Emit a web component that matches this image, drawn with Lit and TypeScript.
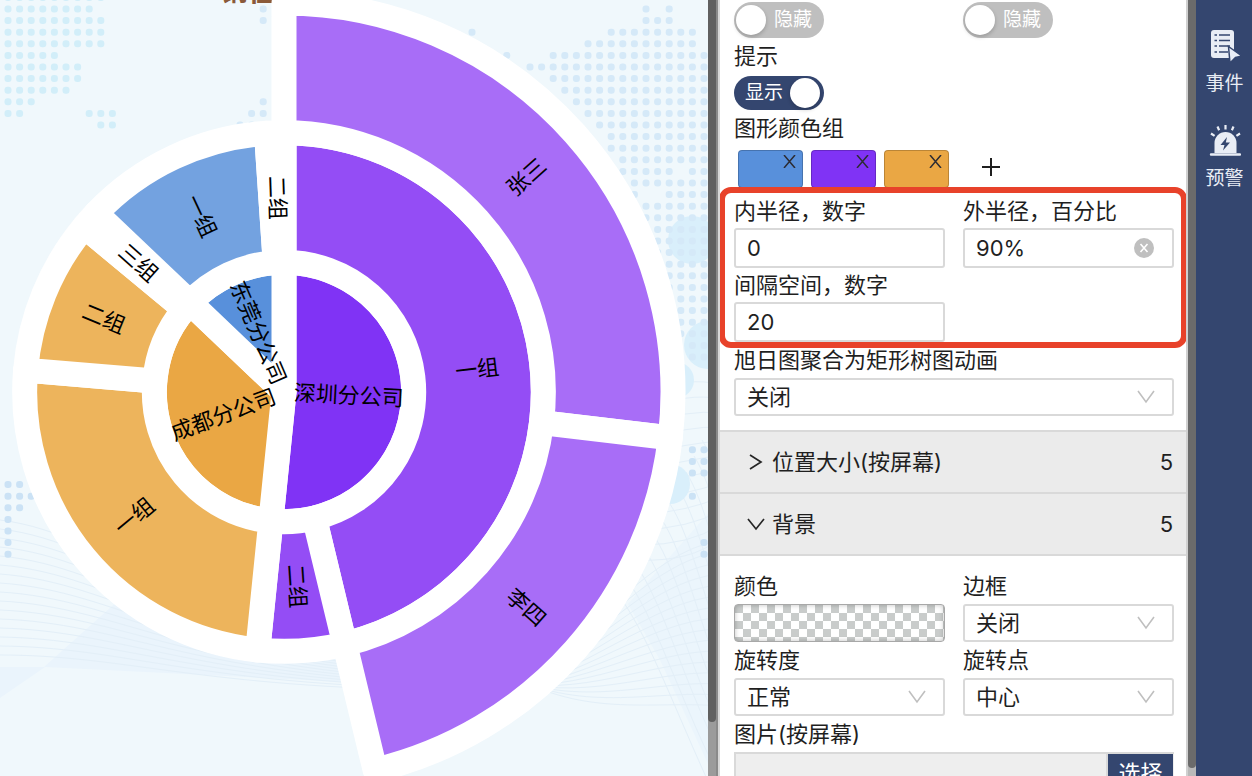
import { LitElement, html, svg, css } from "lit";
import { customElement } from "lit/decorators.js";

const CX = 284;
const CY = 392;
const RING = 389 / 3;
const TOTAL = 93;

interface Slice {
  name: string;
  depth: number;
  from: number;
  to: number;
  color: string;
}

const slices: Slice[] = [
  { name: "深圳分公司", depth: 0, from: 0, to: 48, color: "#8033f5" },
  { name: "成都分公司", depth: 0, from: 48, to: 81, color: "#eaa744" },
  { name: "东莞分公司", depth: 0, from: 81, to: 93, color: "#5890db" },
  { name: "一组", depth: 1, from: 0, to: 43, color: "#944df5" },
  { name: "二组", depth: 1, from: 43, to: 48, color: "#944df5" },
  { name: "一组", depth: 1, from: 48, to: 71, color: "#edb45c" },
  { name: "二组", depth: 1, from: 71, to: 80, color: "#edb45c" },
  { name: "三组", depth: 1, from: 80, to: 81, color: "#edb45c" },
  { name: "一组", depth: 1, from: 81, to: 92, color: "#73a2e0" },
  { name: "二组", depth: 1, from: 92, to: 93, color: "#73a2e0" },
  { name: "张三", depth: 2, from: 0, to: 25, color: "#a86df7" },
  { name: "李四", depth: 2, from: 25, to: 43, color: "#a86df7" },
];

const point = (r: number, deg: number) => {
  const a = (deg * Math.PI) / 180;
  return `${(CX + r * Math.sin(a)).toFixed(2)} ${(CY - r * Math.cos(a)).toFixed(2)}`;
};

const sector = (s: Slice) => {
  const a = (s.from / TOTAL) * 360;
  const b = (s.to / TOTAL) * 360;
  const r0 = s.depth * RING;
  const r1 = r0 + RING;
  const large = b - a > 180 ? 1 : 0;
  const outer = `M${point(r1, a)}A${r1} ${r1} 0 ${large} 1 ${point(r1, b)}`;
  return r0 === 0
    ? `${outer}L${CX} ${CY}Z`
    : `${outer}L${point(r0, b)}A${r0} ${r0} 0 ${large} 0 ${point(r0, a)}Z`;
};

const sectorLabel = (s: Slice) => {
  const mid = ((s.from + s.to) / 2 / TOTAL) * 360;
  const turn = mid > 180 ? mid - 270 : mid - 90;
  return svg`<text class="slice-label" y="-2" transform="translate(${point((s.depth + 0.5) * RING, mid)}) rotate(${turn})">${s.name}</text>`;
};

// World-map dots: [row, first column, last column]
const PITCH = 11.6;
const mapDots: [number, number, number][] = [
  [-1, 0, 8], [0, 0, 7], [1, 0, 8], [2, 0, 8], [3, 0, 8], [4, 0, 4], [5, 0, 6], [6, 0, 6],
  [7, 0, 5], [8, 0, 2], [9, 0, 1], [9, 7, 9], [10, 8, 9],
  [0, 22, 22], [1, 22, 22], [8, 22, 22], [9, 21, 22], [10, 20, 22],
  [0, 55, 55], [0, 57, 57], [1, 55, 57], [2, 40, 40], [2, 52, 59], [3, 50, 59],
  [4, 43, 43], [4, 47, 60], [5, 45, 60], [6, 47, 60], [7, 48, 60], [8, 49, 60], [9, 50, 60],
  [10, 51, 60], [11, 52, 60], [12, 52, 60], [13, 53, 60], [14, 53, 57], [14, 59, 60],
  [15, 54, 60], [16, 54, 54], [16, 57, 60], [17, 54, 60], [18, 55, 60], [19, 55, 60], [20, 56, 60],
  [21, 56, 60], [22, 56, 60], [23, 57, 60], [24, 57, 60], [25, 57, 60], [26, 58, 60],
  [27, 58, 60], [28, 58, 60], [29, 59, 60], [30, 59, 60],
  [38, 59, 60], [39, 59, 60], [40, 59, 60], [42, 59, 59], [46, 60, 60], [47, 60, 60],
  [41, 0, 1], [42, 0, 2], [43, 0, 1], [44, 0, 0], [45, 0, 0], [46, 0, 0], [47, 0, 0],
];

const dots = mapDots.flatMap(([row, a, b]) =>
  Array.from({ length: b - a + 1 }, (_, k) => {
    const col = a + k;
    const fill = col < 15 && row < 15 ? "#d2eef9" : row > 35 ? "#cbe2f5" : "#d5e9f8";
    return svg`<rect x=${8 + col * PITCH - 3.5} y=${9 + row * PITCH - 3.5} width="7" height="7" rx="3" fill=${fill} />`;
  })
);

const waves = [
  ...Array.from({ length: 16 }, (_, i) => `M0 ${520 + i * 9}C120 ${535 + i * 8} 190 ${640 + i * 3} 420 ${660 + i * 2}`),
  ...Array.from({ length: 16 }, (_, i) => `M500 ${668 + i * 3}C580 ${720 - i * 5} 650 ${700 - i * 10} 720 ${706 - i * 11}`),
  ...Array.from({ length: 12 }, (_, i) => `M${622 + i * 8} ${600 - i * 16}C${650 + i * 9} ${640 - i * 14} ${675 + i * 8} 710 ${712 + i * 14} 790`),
  ...Array.from({ length: 12 }, (_, i) => `M640 ${395 + i * 15}Q690 ${375 + i * 17} 720 ${385 + i * 14}`),
];

const chevron = svg`<path d="M1 1l8 11 8-11" fill="none" stroke="#bfbfbf" stroke-width="1.6" />`;

const eventIcon = html`<svg class="nav-icon" width="32" height="34" viewBox="0 0 32 34">
  <rect x="2" y="1" width="23" height="28" rx="3" fill="#e9edf5" />
  <path d="M5.500 6h2.500M10 6h11M5.500 11.500h2.500M10 11.500h11M5.500 17h2.500M10 17h11M5.500 23h2.500M10 23h9" stroke="#34466f" stroke-width="1.700" />
  <path d="M19.500 17.500l13.500 9.500-6.500 1.500-5.500 5.500z" fill="#e9edf5" stroke="#34466f" stroke-width="1.500" />
</svg>`;

const alarmIcon = html`<svg class="nav-icon" width="32" height="34" viewBox="0 0 32 34">
  <path d="M5.500 29V19a11 11 0 0 1 22 0v10z" fill="#e9edf5" />
  <path d="M2 30.500h29" stroke="#e9edf5" stroke-width="2.400" stroke-linecap="round" />
  <path d="M16.500 1v4.500M8.500 2.500l1.600 3.800M24.500 2.500l-1.600 3.800M2 9.500l3.600 2.400M31 9.500l-3.600 2.400" stroke="#e9edf5" stroke-width="2.200" />
  <path d="M18 13l-6.500 8h4l-1.500 5.500 7-8h-4.200z" fill="#34466f" />
</svg>`;

@customElement("sunburst-canvas")
export class SunburstCanvas extends LitElement {
  static styles = css`
    :host {
      display: block;
      overflow: hidden;
      background: #f0f8fc;
    }
    .scene {
      display: block;
      width: 100%;
      height: 100%;
    }
    .title {
      font: 700 28px "Noto Sans CJK SC", sans-serif;
      fill: #8a5a3a;
    }
    .slice {
      stroke: #fff;
      stroke-width: 25px;
      stroke-linejoin: round;
    }
    .slice-label {
      font: 22px "Noto Sans CJK SC", sans-serif;
      fill: #000;
      text-anchor: middle;
      dominant-baseline: central;
    }
    .wave {
      fill: none;
      stroke: #e3eff8;
      stroke-width: 1px;
    }
  `;

  render() {
    return html`<svg class="scene" role="img" aria-label="旭日图">
      <path d="M0 667H44L130 590L340 640L345 682L45 667L0 698Z" fill="#eaf4fc" />
      <path d="M628 604L720 500V790L660 660Z" fill="#ebf5fc" />
      ${waves.map((d) => svg`<path class="wave" d=${d} />`)}
      <circle cx="692" cy="240" r="24" fill="#d9effb" />
      <circle cx="708" cy="345" r="24" fill="#d9effb" />
      <circle cx="676" cy="380" r="18" fill="#d9effb" />
      <circle cx="670" cy="484" r="20" fill="#d9effb" />
      ${dots}
      <text class="title" x="220" y="1">销往</text>
      ${slices.map((s) => svg`<path class="slice" d=${sector(s)} fill=${s.color} />`)}
      ${slices.map(sectorLabel)}
    </svg>`;
  }
}

@customElement("app-root")
export class AppRoot extends LitElement {
  static styles = css`
    :host {
      display: grid;
      grid-template-columns: minmax(0, 1fr) 12px 468px 8px 56px;
      height: 100vh;
      overflow: hidden;
      color: #1f1f1f;
      font: 22px/36px Inter, "Noto Sans CJK SC", sans-serif;
    }
    * {
      box-sizing: border-box;
    }
    button,
    input,
    select {
      margin: 0;
      font: inherit;
      color: inherit;
    }
    .canvas-bar {
      background: linear-gradient(90deg, #9b9b9b 8px, #8a8a8a 8px, #8a8a8a 10px, #d8d8d8 10px);
    }
    .canvas-thumb {
      width: 8px;
      height: 93%;
      background: #606060;
      border-radius: 0 0 4px 4px;
    }
    .panel-bar {
      background: #b9b9b9;
    }
    .panel-thumb {
      height: 99%;
      background: #6b6b6b;
      border-radius: 0 0 4px 4px;
    }
    .panel {
      overflow: hidden;
      background: #fff;
      border-right: 2px solid #d0d0d0;
    }
    .body {
      padding: 2px 12px 14px 14px;
    }
    .body.second {
      padding-top: 12px;
    }
    .fields {
      display: grid;
      grid-template-columns: repeat(2, minmax(0, 1fr));
      column-gap: 18px;
    }
    .wide {
      grid-column: 1 / -1;
    }
    .caption {
      display: block;
      white-space: nowrap;
    }
    .toggle {
      display: flex;
      align-items: center;
      justify-content: space-between;
      width: 90px;
      height: 36px;
      padding: 0 12px 0 2px;
      border-radius: 18px;
      background: #bfbfbf;
      color: #fff;
      font-size: 19px;
    }
    .toggle.on {
      flex-direction: row-reverse;
      height: 34px;
      margin-top: 2px;
      padding: 0 4px 0 11px;
      background: #34466f;
    }
    .knob {
      appearance: none;
      width: 30px;
      height: 30px;
      border-radius: 50%;
      background: #fff;
      box-shadow: 0 2px 4px rgba(0, 0, 0, 0.2);
    }
    .swatches {
      display: flex;
      align-items: flex-start;
      gap: 8px;
      padding: 4px 4px 0;
    }
    .swatch {
      display: flex;
      justify-content: flex-end;
      width: 65px;
      height: 38px;
      padding: 4px 6px;
      border: 1px solid rgba(0, 0, 0, 0.2);
      border-radius: 4px;
    }
    .blue {
      background: #5890db;
    }
    .purple {
      background: #8033f5;
    }
    .orange {
      background: #eaa744;
    }
    .icon-button {
      display: flex;
      padding: 0;
      border: 0;
      background: none;
    }
    .add {
      margin: 7px 0 0 24px;
    }
    .highlight {
      position: relative;
      padding: 6px 0 0;
      line-height: 34px;
    }
    .highlight::after {
      content: "";
      position: absolute;
      inset: -1px -13px -6px -15px;
      border: 6px solid #e8422a;
      border-radius: 12px;
      pointer-events: none;
    }
    .control {
      display: flex;
      align-items: center;
      height: 38px;
      border: 2px solid #d9d9d9;
      border-radius: 3px;
      background: #fff;
    }
    .highlight .control {
      height: 40px;
    }
    .text {
      flex: 1;
      min-width: 0;
      height: 100%;
      padding: 0 11px;
      border: 0;
      outline: 0;
      background: none;
    }
    .clear {
      margin-right: 18px;
    }
    .pick {
      display: grid;
      align-items: center;
    }
    .pick > * {
      grid-area: 1 / 1;
    }
    .select {
      width: 100%;
      height: 34px;
      padding: 0 40px 0 11px;
      border: 0;
      outline: 0;
      appearance: none;
      background: none;
      line-height: 34px;
    }
    .arrow {
      justify-self: end;
      margin-right: 17px;
      pointer-events: none;
    }
    .section {
      display: flex;
      align-items: center;
      width: 100%;
      height: 62px;
      padding: 0 13px 0 26px;
      border: 0;
      border-top: 2px solid #d9d9d9;
      background: #ebebeb;
      text-align: left;
    }
    .section.open {
      height: 64px;
      border-bottom: 2px solid #d9d9d9;
    }
    .section-name {
      flex: 1;
      margin-left: 6px;
    }
    .checker {
      display: block;
      width: 100%;
      height: 38px;
      padding: 0;
      border: 1px solid #a8a8a8;
      border-radius: 4px;
      background: repeating-conic-gradient(#fff 0 25%, #c9cccb 0 50%) 0 0 / 16px 16px;
      box-shadow: inset 0 0 5px rgba(0, 0, 0, 0.25);
    }
    .file {
      display: flex;
      height: 42px;
      padding-right: 1px;
      border: 2px solid #d9d9d9;
      border-right-width: 0;
      background: #eee;
    }
    .choose {
      width: 65px;
      padding: 0;
      border: 0;
      background: #34466f;
      color: #fff;
      line-height: 30px;
      box-shadow: -2px 0 #d9d9d9;
    }
    .nav {
      display: flex;
      flex-direction: column;
      gap: 13px;
      padding: 29px 0 0 1px;
      background: #34466f;
    }
    .nav-item {
      display: flex;
      flex-direction: column;
      align-items: center;
      gap: 5px;
      height: 82px;
      padding: 0;
      border: 0;
      background: none;
      color: #e9edf5;
      font-size: 19px;
      line-height: 32px;
    }
    .nav-icon {
      flex: none;
    }
  `;

  private select(id: string, value: string) {
    return html`<div class="control pick">
      <select class="select" id=${id}><option>${value}</option></select>
      <svg class="arrow" width="18" height="14" viewBox="0 0 18 14">${chevron}</svg>
    </div>`;
  }

  private swatch(color: string) {
    return html`<div class="swatch ${color}">
      <button class="icon-button" aria-label="删除颜色">
        <svg width="13" height="13" viewBox="0 0 13 13"><path d="M1 0l11 13M12 0L1 13" stroke="#2c2c33" stroke-width="1.500" /></svg>
      </button>
    </div>`;
  }

  render() {
    return html`
      <sunburst-canvas></sunburst-canvas>
      <div class="canvas-bar"><div class="canvas-thumb"></div></div>
      <main class="panel">
        <div class="body">
          <div class="fields">
            <label class="toggle"><input class="knob" type="checkbox" />隐藏</label>
            <label class="toggle"><input class="knob" type="checkbox" />隐藏</label>
          </div>
          <label class="caption" for="tip">提示</label>
          <label class="toggle on"><input class="knob" id="tip" type="checkbox" checked />显示</label>
          <span class="caption">图形颜色组</span>
          <div class="swatches">
            ${this.swatch("blue")} ${this.swatch("purple")} ${this.swatch("orange")}
            <button class="icon-button add" aria-label="添加颜色">
              <svg width="20" height="20" viewBox="0 0 20 20"><path d="M10 1v18M1 10h18" stroke="#1f1f1f" stroke-width="2" /></svg>
            </button>
          </div>
          <div class="fields highlight">
            <div>
              <label class="caption" for="inner">内半径，数字</label>
              <div class="control"><input class="text" id="inner" type="text" value="0" /></div>
            </div>
            <div>
              <label class="caption" for="outer">外半径，百分比</label>
              <div class="control">
                <input class="text" id="outer" type="text" value="90%" />
                <button class="icon-button clear" aria-label="清除">
                  <svg width="20" height="20" viewBox="0 0 20 20"><circle cx="10" cy="10" r="10" fill="#bfbfbf" /><path d="M6.500 6l7 8M13.500 6l-7 8" stroke="#fff" stroke-width="1.600" /></svg>
                </button>
              </div>
            </div>
            <div>
              <label class="caption" for="gap">间隔空间，数字</label>
              <div class="control"><input class="text" id="gap" type="text" value="20" /></div>
            </div>
          </div>
          <label class="caption" for="anim">旭日图聚合为矩形树图动画</label>
          ${this.select("anim", "关闭")}
        </div>
        <button class="section" aria-expanded="false">
          <svg width="20" height="18" viewBox="0 0 20 18"><path d="M4 2l11 7-11 7" fill="none" stroke="#262626" stroke-width="1.700" /></svg>
          <span class="section-name">位置大小(按屏幕)</span>5
        </button>
        <button class="section open" aria-expanded="true">
          <svg width="20" height="18" viewBox="0 0 20 18"><path d="M2 4l8 10 8-10" fill="none" stroke="#262626" stroke-width="1.700" /></svg>
          <span class="section-name">背景</span>5
        </button>
        <div class="body second">
          <div class="fields">
            <div>
              <label class="caption" for="color">颜色</label>
              <button class="checker" id="color" aria-label="颜色"></button>
            </div>
            <div>
              <label class="caption" for="border">边框</label>
              ${this.select("border", "关闭")}
            </div>
            <div>
              <label class="caption" for="rotate">旋转度</label>
              ${this.select("rotate", "正常")}
            </div>
            <div>
              <label class="caption" for="origin">旋转点</label>
              ${this.select("origin", "中心")}
            </div>
            <div class="wide">
              <label class="caption" for="image">图片(按屏幕)</label>
              <div class="file">
                <input class="text" id="image" type="text" />
                <button class="choose">选择</button>
              </div>
            </div>
          </div>
        </div>
      </main>
      <div class="panel-bar"><div class="panel-thumb"></div></div>
      <nav class="nav">
        <button class="nav-item">${eventIcon}事件</button>
        <button class="nav-item">${alarmIcon}预警</button>
      </nav>
    `;
  }
}
